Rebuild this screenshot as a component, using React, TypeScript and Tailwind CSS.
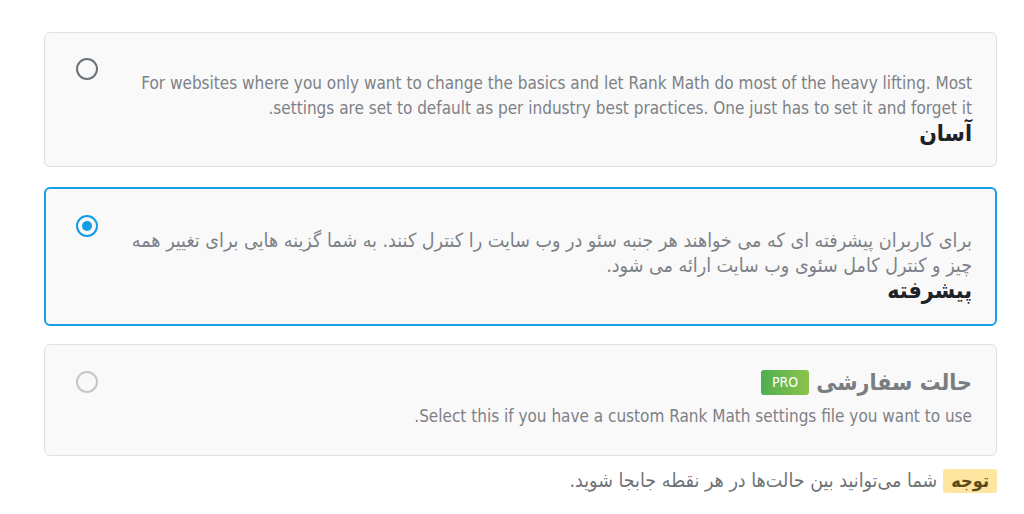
import React from 'react';

const font = { fontFamily: '"DejaVu Sans Condensed", "DejaVu Sans", sans-serif' };

function Radio({ state }: { state: 'off' | 'on' | 'disabled' }) {
  if (state === 'on') {
    return (
      <span className="flex h-[22px] w-[22px] items-center justify-center rounded-full border-2 border-[#109ce6]">
        <span className="h-[10px] w-[10px] rounded-full bg-[#109ce6]" />
      </span>
    );
  }
  return (
    <span
      className={
        'block h-[22px] w-[22px] rounded-full border-2 ' +
        (state === 'off' ? 'border-[#6c7279]' : 'border-[#c4c7cb]')
      }
    />
  );
}

export default function App() {
  return (
    <div className="min-h-[514px] bg-white" style={font}>
      <div className="ml-[44px] w-[953px] pt-[32px]">
        {/* easy */}
        <div className="relative rounded-md border border-[#dde1e6] bg-[#f9f9f9] pb-[20px] pl-[90px] pr-[24px] pt-[38px]" dir="rtl">
          <div className="absolute left-[31px] top-[25px]">
            <Radio state="off" />
          </div>
          <p className="text-[17px] leading-[25px] text-[#7d8187]">
            For websites where you only want to change the basics and let Rank Math do most of the heavy lifting. Most
            <br />
            settings are set to default as per industry best practices. One just has to set it and forget it.
          </p>
          <h3 className="text-[23px] font-bold leading-[25px] text-[#1e2226]">آسان</h3>
        </div>

        {/* advanced */}
        <div className="relative mt-[20px] rounded-md border-2 border-[#18a0e3] bg-[#f9f9f9] pb-[21px] pl-[60px] pr-[23px] pt-[39px]" dir="rtl">
          <div className="absolute left-[30px] top-[26px]">
            <Radio state="on" />
          </div>
          <p className="whitespace-nowrap text-[19.5px] leading-[25px] text-[#7d8187]">
            برای کاربران پیشرفته ای که می خواهند هر جنبه سئو در وب سایت را کنترل کنند. به شما گزینه هایی برای تغییر همه
            <br />
            چیز و کنترل کامل سئوی وب سایت ارائه می شود.
          </p>
          <h3 className="text-[23px] font-bold leading-[25px] text-[#1e2226]">پیشرفته</h3>
        </div>

        {/* custom */}
        <div className="relative mt-[18px] rounded-md border border-[#dde1e6] bg-[#f9f9f9] pb-[26px] pl-[90px] pr-[24px] pt-[22px]" dir="rtl">
          <div className="absolute left-[31px] top-[26px]">
            <Radio state="disabled" />
          </div>
          <div className="flex h-[30px] items-center gap-[7px]">
            <h3 className="text-[23px] font-bold text-[#7a7e83]">حالت سفارشی</h3>
            <span
              className="rounded-[3px] bg-gradient-to-r from-[#4caf50] to-[#8bc34a] px-[11px] py-[3px] text-[14px] leading-[19px] text-white"
              dir="ltr"
            >
              PRO
            </span>
          </div>
          <p className="mt-[7px] text-[17px] leading-[25px] text-[#7d8187]">
            Select this if you have a custom Rank Math settings file you want to use.
          </p>
        </div>

        {/* note */}
        <div className="mt-[13px] flex items-center gap-[6px]" dir="rtl">
          <span className="rounded-[3px] bg-[#ffe6a0] px-[8px] text-[18px] font-bold leading-[24px] text-[#5a4a1a]">
            توجه
          </span>
          <span className="text-[19.5px] leading-[24px] text-[#6f7378]">
            شما می‌توانید بین حالت‌ها در هر نقطه جابجا شوید.
          </span>
        </div>
      </div>
    </div>
  );
}
